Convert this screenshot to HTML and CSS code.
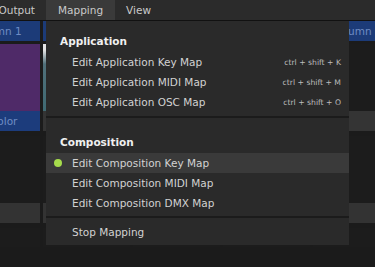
FILE: index.html
```html
<!DOCTYPE html>
<html>
    <head>
        <title>Mapping</title>
        <link rel="stylesheet" href="styles.css">
    </head>
    <body>
        <div class="menubar">
            <span class="menubar-item first">Output</span>
            <span class="menubar-item open">Mapping</span>
            <span class="menubar-item">View</span>
        </div>

        <div class="deck">
            <div class="deck-row header-row">
                <div class="cell col-header">Column 1</div>
                <div class="cell col-header">Column 2</div>
                <div class="cell col-header">Column 3</div>
                <div class="cell col-header">Column 4</div>
                <div class="cell col-header">Column 5</div>
            </div>
            <div class="deck-row clip-row">
                <div class="cell clip">
                    <div class="thumb purple"></div>
                    <div class="clip-name blue">Color</div>
                </div>
                <div class="cell clip">
                    <div class="thumb teal"></div>
                    <div class="clip-name"></div>
                </div>
                <div class="cell clip"><div class="thumb"></div><div class="clip-name"></div></div>
                <div class="cell clip"><div class="thumb"></div><div class="clip-name"></div></div>
                <div class="cell clip"><div class="thumb"></div><div class="clip-name"></div></div>
            </div>
            <div class="deck-row clip-row">
                <div class="cell clip"><div class="thumb"></div><div class="clip-name"></div></div>
                <div class="cell clip"><div class="thumb"></div><div class="clip-name"></div></div>
                <div class="cell clip"><div class="thumb"></div><div class="clip-name"></div></div>
                <div class="cell clip"><div class="thumb"></div><div class="clip-name"></div></div>
                <div class="cell clip"><div class="thumb"></div><div class="clip-name"></div></div>
            </div>
            <div class="deck-row clip-row">
                <div class="cell clip"><div class="thumb short"></div></div>
                <div class="cell clip"><div class="thumb short"></div></div>
                <div class="cell clip"><div class="thumb short"></div></div>
                <div class="cell clip"><div class="thumb short"></div></div>
                <div class="cell clip"><div class="thumb short"></div></div>
            </div>
        </div>

        <div class="dropdown">
            <div class="menu-section first">
                <div class="menu-heading">Application</div>
                <div class="menu-item"><span>Edit Application Key Map</span><span class="shortcut">ctrl + shift + K</span></div>
                <div class="menu-item"><span>Edit Application MIDI Map</span><span class="shortcut">ctrl + shift + M</span></div>
                <div class="menu-item"><span>Edit Application OSC Map</span><span class="shortcut">ctrl + shift + O</span></div>
            </div>
            <div class="menu-section second">
                <div class="menu-heading">Composition</div>
                <div class="menu-item active"><span class="dot"></span><span>Edit Composition Key Map</span></div>
                <div class="menu-item"><span>Edit Composition MIDI Map</span></div>
                <div class="menu-item"><span>Edit Composition DMX Map</span></div>
            </div>
            <div class="menu-section last">
                <div class="menu-item"><span>Stop Mapping</span></div>
            </div>
        </div>
    </body>
</html>
```

FILE: styles.css
```css
body {
    margin:0;
    padding:0;
    background-color:#1b1b1b;
    font-family:"DejaVu Sans", Verdana, sans-serif;
    font-size:10.5px;
    overflow:hidden;
    position:relative;
    width:375px;
    height:267px;
}

/* top menu bar */
.menubar {
    display:flex;
    height:20px;
    background-color:#2b2b2b;
    border-bottom:1px solid #111;
    overflow:hidden;
}

.menubar-item {
    padding:0 11.5px;
    line-height:20px;
    color:#c9c9c9;
    white-space:nowrap;
}

.menubar-item.first {
    margin-left:-13px;
}

.menubar-item.open {
    background-color:#3a3a3a;
}

/* clip deck behind the menu */
.deck {
    margin-left:-47px;
    display:flex;
    flex-direction:column;
    gap:5px;
    overflow:hidden;
    width:422px;
    height:246px;
}

.deck-row {
    display:flex;
    gap:3px;
}

.header-row {
    margin-bottom:-2px;
}

.cell {
    width:87px;
    flex:none;
}

.col-header {
    height:20px;
    line-height:20px;
    background-color:#1c3b78;
    color:#6f8cc4;
    text-align:center;
    white-space:nowrap;
    overflow:hidden;
}

.clip {
    display:flex;
    flex-direction:column;
}

.thumb {
    height:67px;
    background-color:#1c1c1c;
}

.thumb.short {
    height:19px;
}

.thumb.purple {
    background-color:#4f2a68;
}

.thumb.teal {
    background:linear-gradient(#e4e4e4 0, #e4e4e4 6px, #50707a 20px, #3f6a73);
}

.clip-name {
    height:20px;
    line-height:20px;
    background-color:#343434;
    padding-left:37px;
    color:#6f8cc4;
    white-space:nowrap;
    overflow:hidden;
}

.clip-name.blue {
    background-color:#1c3c7c;
}

.clip-row + .clip-row .clip-name {
    background-color:#333;
}

/* the open Mapping dropdown */
.dropdown {
    position:absolute;
    left:46px;
    top:21px;
    width:303px;
    height:224px;
    background-color:#2a2a2a;
}

.menu-section {
    padding:14px 0 3px 0;
    border-bottom:2px solid #1b1b1b;
}

.menu-section.first {
    padding:10px 0 4px 0;
}

.menu-section.last {
    padding-top:4px;
    border-bottom:none;
}

.menu-heading {
    height:20px;
    line-height:20px;
    padding-left:14px;
    margin-bottom:1px;
    color:#f0f0f0;
    font-weight:bold;
}

.menu-item {
    position:relative;
    display:flex;
    justify-content:space-between;
    align-items:center;
    height:20px;
    padding:0 8px 0 26px;
    color:#d2d2d2;
    white-space:nowrap;
}

.menu-item.active {
    justify-content:flex-start;
    background-color:#3a3a3a;
}

.menu-item .shortcut {
    font-size:7.7px;
    color:#bdbdbd;
}

.dot {
    position:absolute;
    left:8px;
    top:6px;
    width:8px;
    height:8px;
    border-radius:50%;
    background-color:#a6dc4c;
}
```
